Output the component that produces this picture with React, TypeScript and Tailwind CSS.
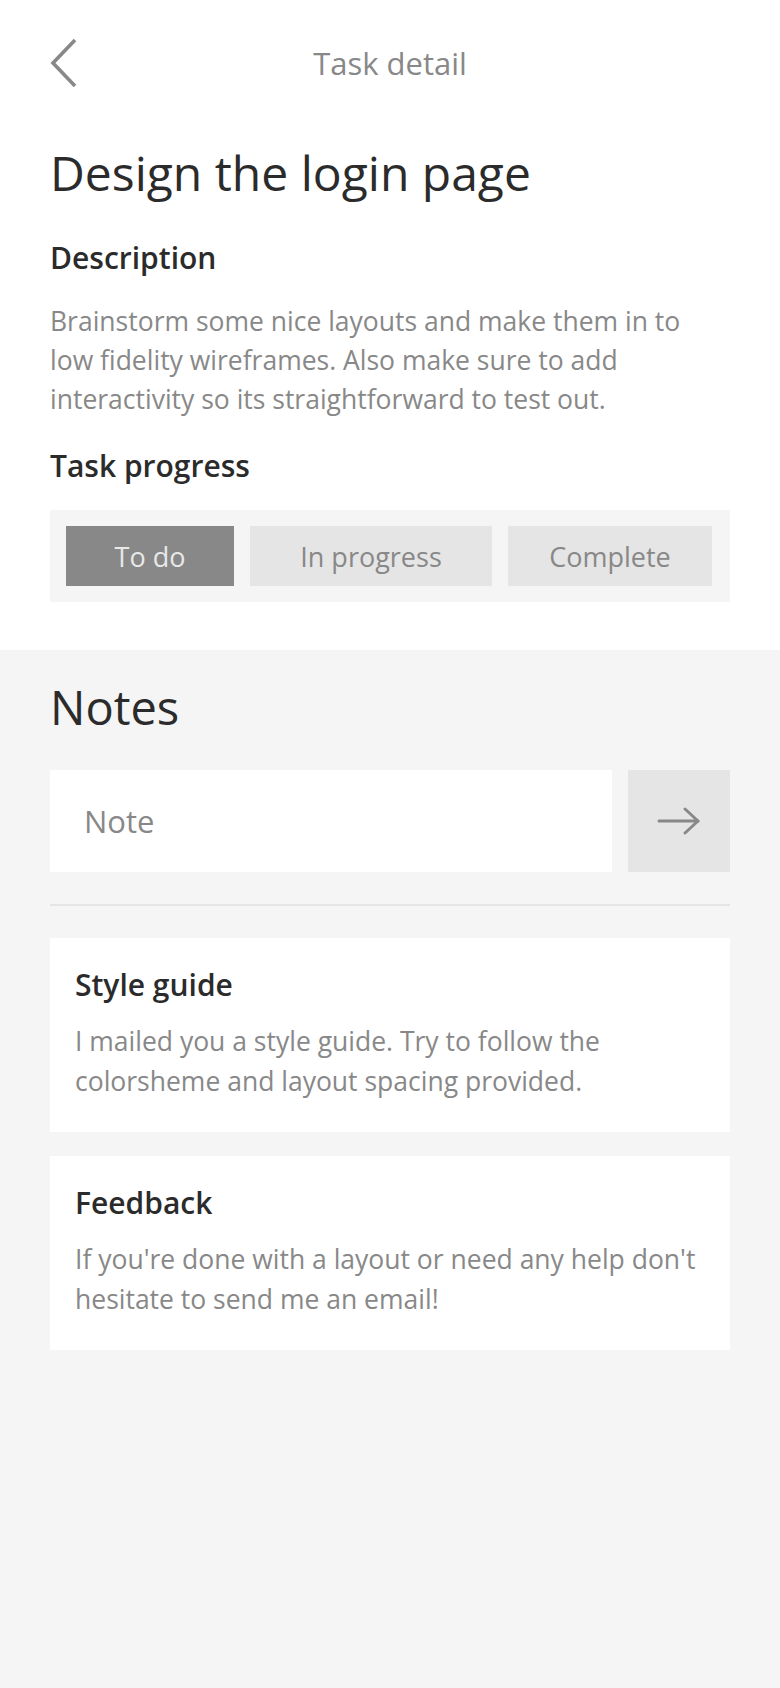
import React from "react";

const font = { fontFamily: "'Open Sans', Lato, sans-serif" };

function Chevron() {
  return (
    <svg width="30" height="52" viewBox="0 0 30 52" fill="none">
      <path d="M25 3 L3 26 L25 49" stroke="#888888" strokeWidth="3.6" strokeLinecap="butt" strokeLinejoin="miter" />
    </svg>
  );
}

function Arrow() {
  return (
    <svg width="44" height="30" viewBox="0 0 44 30" fill="none">
      <path d="M2 15 H41" stroke="#888888" strokeWidth="3" strokeLinecap="round" />
      <path d="M28 3 L41 15 L28 27" stroke="#888888" strokeWidth="3" strokeLinecap="round" strokeLinejoin="round" />
    </svg>
  );
}

function NoteCard({ title, lines }: { title: string; lines: string[] }) {
  return (
    <div className="bg-white h-[194px] px-[25px] pt-[29px]">
      <div className="text-[30px] font-semibold leading-[36px] text-[#2b2b2b]">{title}</div>
      <div className="mt-[18px] text-[26.5px] leading-[40px] text-[#888888] whitespace-nowrap">
        {lines.map((l, i) => (
          <div key={i}>{l}</div>
        ))}
      </div>
    </div>
  );
}

export default function App() {
  return (
    <div className="w-full min-h-[1688px] bg-[#f5f5f5] flex flex-col" style={font}>
      <div className="bg-white px-[50px] pb-[48px]">
        <div className="h-[126px] flex items-center">
          <div className="w-[40px] flex items-center">
            <Chevron />
          </div>
          <div className="flex-1 text-center text-[31px] leading-[40px] text-[#888888]">Task detail</div>
          <div className="w-[40px]" />
        </div>
        <h1 className="mt-[19px] text-[48px] leading-[56px] text-[#2b2b2b]">Design the login page</h1>
        <h2 className="mt-[39px] text-[30px] font-semibold leading-[36px] text-[#2b2b2b]">Description</h2>
        <p className="mt-[26px] text-[26.5px] leading-[39px] text-[#888888] whitespace-nowrap">
          <span className="block">Brainstorm some nice layouts and make them in to</span>
          <span className="block">low fidelity wireframes. Also make sure to add</span>
          <span className="block">interactivity so its straightforward to test out.</span>
        </p>
        <h2 className="mt-[29px] text-[30px] font-semibold leading-[36px] text-[#2b2b2b]">Task progress</h2>
        <div className="mt-[26px] bg-[#f5f5f5] h-[92px] px-[16px] flex items-center gap-[16px]">
          <div className="w-[168px] h-[60px] pt-[3px] bg-[#888888] text-[#e8e8e8] text-[27px] flex items-center justify-center">To do</div>
          <div className="w-[242px] h-[60px] pt-[3px] bg-[#e5e5e5] text-[#888888] text-[27px] flex items-center justify-center">In progress</div>
          <div className="w-[204px] h-[60px] pt-[3px] bg-[#e5e5e5] text-[#888888] text-[27px] flex items-center justify-center">Complete</div>
        </div>
      </div>
      <div className="px-[50px] pt-[29px] pb-[40px]">
        <h2 className="text-[47px] leading-[56px] text-[#2b2b2b]">Notes</h2>
        <div className="mt-[35px] flex gap-[16px] h-[102px]">
          <div className="flex-1 bg-white flex items-center pl-[34px] text-[31px] text-[#888888]">Note</div>
          <div className="w-[102px] bg-[#e5e5e5] flex items-center justify-center">
            <Arrow />
          </div>
        </div>
        <div className="mt-[32px] h-[2px] bg-[#e5e5e5]" />
        <div className="mt-[32px] flex flex-col gap-[24px]">
          <NoteCard
            title="Style guide"
            lines={["I mailed you a style guide. Try to follow the", "colorsheme and layout spacing provided."]}
          />
          <NoteCard
            title="Feedback"
            lines={["If you're done with a layout or need any help don't", "hesitate to send me an email!"]}
          />
        </div>
      </div>
    </div>
  );
}
